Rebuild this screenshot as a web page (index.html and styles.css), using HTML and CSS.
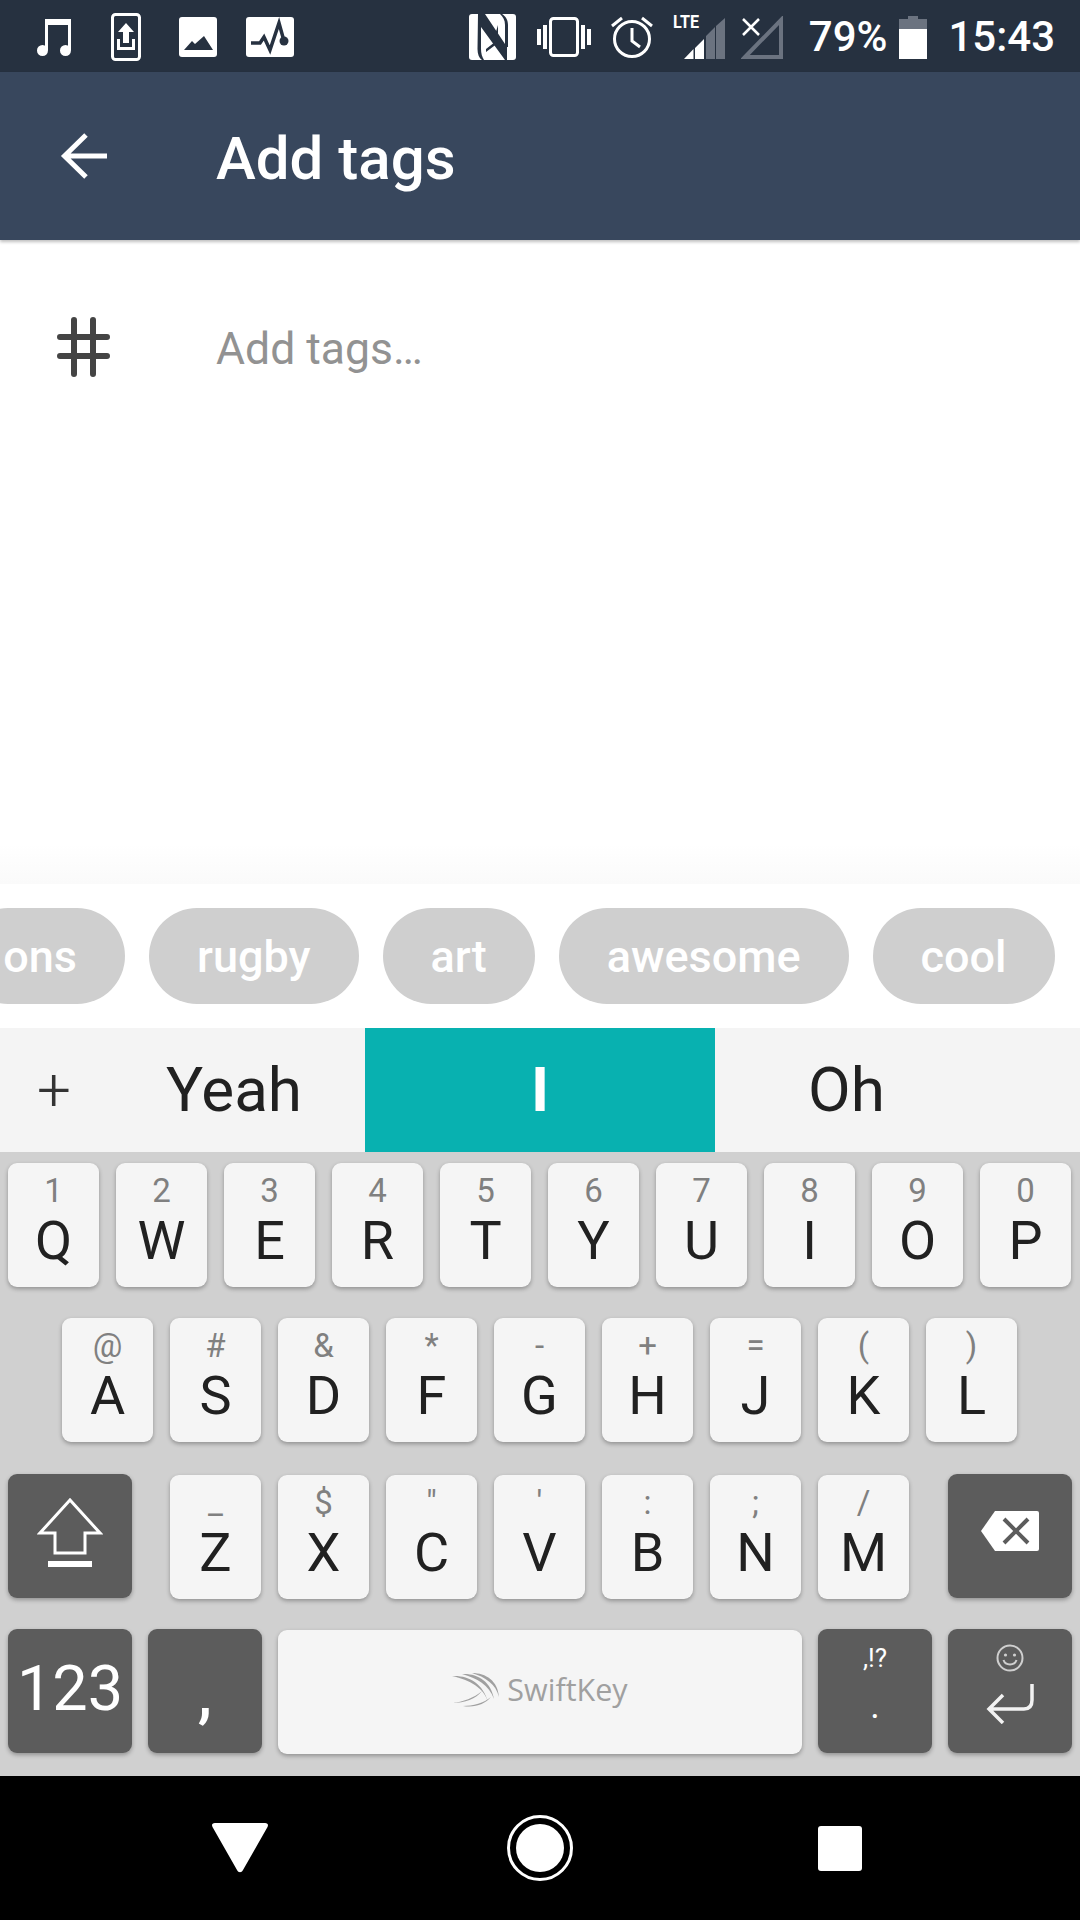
FILE: index.html
```html
<!DOCTYPE html>
<html lang="en">
<head>
<meta charset="utf-8">
<title>Add tags</title>
<link rel="stylesheet" href="styles.css">
</head>
<body>
<div class="phone">
  <div class="status">
    <svg class="si s-music" viewBox="0 0 34 37"><circle cx="5.500" cy="31.500" r="5.500" fill="#fff"/><circle cx="28.500" cy="31.500" r="5.500" fill="#fff"/><path fill="#fff" d="M8 31V0h26v31h-3V6H11v25z"/></svg>
    <svg class="si s-upload" viewBox="0 0 30 48"><rect x="1.500" y="1.500" width="27" height="45" rx="3" fill="none" stroke="#fff" stroke-width="3"/><path fill="#fff" d="M15 10l8 9h-5v11h-6V19H7zM6 26h3v8h12v-8h3v11H6z"/></svg>
    <svg class="si s-image" viewBox="0 0 38 40"><rect width="38" height="40" rx="3" fill="#fff"/><path fill="#263140" d="M5 33l8-9 3 3 9-8 9 14z"/></svg>
    <svg class="si s-pulse" viewBox="0 0 48 40"><rect width="48" height="40" rx="3" fill="#fff"/><path fill="none" stroke="#263140" stroke-width="3.500" d="M5 26h9l4-6 6 13 9-27 5 18"/><circle cx="38" cy="24" r="4.500" fill="#263140"/></svg>
    <span class="spring"></span>
    <svg class="si s-nfc" viewBox="0 0 47 46"><rect width="47" height="46" rx="3" fill="#fff"/><path fill="#263140" d="M9 0h7l22 33v13h-2L12 13v22c0 4 1 8 3 11h-2c-3-2-4.500-6-4.500-11z"/><path fill="#263140" d="M31 0h2c3 2 6 5 6 11v22h-3V11c0-5-2-8-5-11zM29 11v11l-3 3 3 4-12 9v-3l9-7-9-12v-3l9 8z" fill-rule="evenodd"/></svg>
    <svg class="si s-vib" viewBox="0 0 54 40"><rect x="13.500" y="1.500" width="27" height="37" rx="3" fill="none" stroke="#fff" stroke-width="3"/><path fill="#fff" d="M0 12h4v16H0zM6 8h4v24H6zM44 8h4v24h-4zM50 12h4v16h-4z"/></svg>
    <svg class="si s-alarm" viewBox="0 0 42 42"><circle cx="21" cy="23" r="17.500" fill="none" stroke="#fff" stroke-width="3"/><path fill="none" stroke="#fff" stroke-width="3" d="M21 12v13l8 6M1 10l10-8M41 10L31 2"/></svg>
    <span class="s-sig">
      <span class="lte">LTE</span>
      <svg class="si s-bars" viewBox="0 0 41 41"><path fill="#fff" d="M0 41l9.500-10v10zM11 30l9-9v20h-9z"/><path fill="#6b7380" d="M22 18l9-9v32h-9zM32 8l9-8v41h-9z"/></svg>
    </span>
    <svg class="si s-nosig" viewBox="0 0 42 43"><path fill="none" stroke="#6b7380" stroke-width="4" d="M4 41L40 4v37z"/><path fill="none" stroke="#fff" stroke-width="2.500" d="M2 3l16 16M18 3L2 19"/></svg>
    <span class="pct">79%</span>
    <svg class="si s-batt" viewBox="0 0 28 43"><path fill="#6b7380" d="M9 0h10v3h9v10H0V3h9z"/><path fill="#fff" d="M0 13h28v30H0z"/></svg>
    <span class="clock">15:43</span>
  </div>

  <header class="bar">
    <svg class="back" viewBox="0 0 48 48"><path fill="none" stroke="#fff" stroke-width="5" d="M47 24H6M26 3L4.500 24 26 45"/></svg>
    <h1 class="title">Add tags</h1>
  </header>

  <main class="body">
    <div class="field">
      <svg class="hash" viewBox="0 0 54 60"><path fill="none" stroke="#444" stroke-width="6" stroke-linecap="round" d="M17 3v54M36 3v54M3 20h47M3 39h47"/></svg>
      <span class="placeholder">Add tags…</span>
    </div>
    <div class="fade"></div>
  </main>

  <div class="chips">
    <span class="chip chip-cut">ons</span>
    <span class="chip">rugby</span>
    <span class="chip">art</span>
    <span class="chip">awesome</span>
    <span class="chip">cool</span>
  </div>

  <div class="cands">
    <span class="plus">+</span>
    <span class="cand cand-l">Yeah</span>
    <span class="cand cand-m">I</span>
    <span class="cand cand-r">Oh</span>
  </div>

  <div class="kbd">
    <div class="row row-1">
      <div class="key"><small>1</small><b>Q</b></div>
      <div class="key"><small>2</small><b>W</b></div>
      <div class="key"><small>3</small><b>E</b></div>
      <div class="key"><small>4</small><b>R</b></div>
      <div class="key"><small>5</small><b>T</b></div>
      <div class="key"><small>6</small><b>Y</b></div>
      <div class="key"><small>7</small><b>U</b></div>
      <div class="key"><small>8</small><b>I</b></div>
      <div class="key"><small>9</small><b>O</b></div>
      <div class="key"><small>0</small><b>P</b></div>
    </div>
    <div class="row row-2">
      <div class="key"><small>@</small><b>A</b></div>
      <div class="key"><small>#</small><b>S</b></div>
      <div class="key"><small>&amp;</small><b>D</b></div>
      <div class="key"><small>*</small><b>F</b></div>
      <div class="key"><small>-</small><b>G</b></div>
      <div class="key"><small>+</small><b>H</b></div>
      <div class="key"><small>=</small><b>J</b></div>
      <div class="key"><small>(</small><b>K</b></div>
      <div class="key"><small>)</small><b>L</b></div>
    </div>
    <div class="row row-3">
      <div class="dark wide">
        <svg class="shift" viewBox="0 0 66 70"><path fill="none" stroke="#fff" stroke-width="3" d="M33 3L3 36h15v20h30V36h15z"/><path fill="#fff" d="M11 64h44v6H11z"/></svg>
      </div>
      <div class="letters">
        <div class="key"><small>_</small><b>Z</b></div>
        <div class="key"><small>$</small><b>X</b></div>
        <div class="key"><small>"</small><b>C</b></div>
        <div class="key"><small>'</small><b>V</b></div>
        <div class="key"><small>:</small><b>B</b></div>
        <div class="key"><small>;</small><b>N</b></div>
        <div class="key"><small>/</small><b>M</b></div>
      </div>
      <div class="dark wide">
        <svg class="bksp" viewBox="0 0 58 40"><path fill="#fff" d="M14 0h42a2 2 0 0 1 2 2v36a2 2 0 0 1-2 2H14L0 20z"/><path fill="none" stroke="#5c5c5c" stroke-width="4" d="M23 8l24 24M47 8L23 32"/></svg>
      </div>
    </div>
    <div class="row row-4">
      <div class="dark wide num">123</div>
      <div class="dark comma">,</div>
      <div class="space">
        <svg class="swoosh" viewBox="0 0 48 34"><path fill="#a0a0a0" d="M0 3c16-1 31 7 36 26C32 15 18 7 0 3zM10 1c15-1 29 7 32 25C37 12 25 5 10 1zM20 0c14 0 26 8 27 24C44 11 33 4 20 0zM0 30c11-1 22-5 30-12-6 8-17 12-30 12zM11 33c10 0 21-3 28-9-6 7-16 11-28 9z"/></svg>
        <span class="brand">SwiftKey</span>
      </div>
      <div class="dark period"><small>,!?</small><span class="dot">.</span></div>
      <div class="dark wide enter">
        <svg class="smile" viewBox="0 0 28 28"><circle cx="14" cy="14" r="12.500" fill="none" stroke="#cfcfcf" stroke-width="2"/><circle cx="9.500" cy="11" r="1.600" fill="#cfcfcf"/><circle cx="18.500" cy="11" r="1.600" fill="#cfcfcf"/><path fill="none" stroke="#cfcfcf" stroke-width="2" d="M7.500 16c2 6 11 6 13 0"/></svg>
        <svg class="ret" viewBox="0 0 48 40"><path fill="none" stroke="#f2f2f2" stroke-width="3.500" d="M46 0v16c0 6-3 9-8 9H4M17 11L3 25l14 14"/></svg>
      </div>
    </div>
  </div>

  <nav class="nav">
    <svg class="n-back" viewBox="0 0 56 50"><path fill="#fff" d="M3 0h50c3 0 3.500 2 2.500 4L31 47c-1.500 3-4.500 3-6 0L.5 4C-.5 2 0 0 3 0z"/></svg>
    <svg class="n-home" viewBox="0 0 66 66"><circle cx="33" cy="33" r="31.500" fill="none" stroke="#fff" stroke-width="3"/><circle cx="33" cy="33" r="24" fill="#fff"/></svg>
    <span class="n-rec"></span>
  </nav>
</div>
</body>
</html>
```
FILE: styles.css
```css
* { box-sizing: border-box; margin: 0; padding: 0; }
html, body { width: 1080px; height: 1920px; overflow: hidden; }
body { font-family: Roboto, "Noto Sans", sans-serif; background: #fff; }
.phone { width: 1080px; height: 1920px; display: flex; flex-direction: column; }

.status { height: 72px; background: #263140; display: flex; align-items: center; padding: 2px 0 0 37px; color: #fff; flex: none; }
.si { display: block; flex: none; }
.spring { flex: 1; }
.s-music { width: 34px; height: 37px; }
.s-upload { width: 30px; height: 48px; margin-left: 40px; }
.s-image { width: 38px; height: 40px; margin-left: 38px; }
.s-pulse { width: 48px; height: 40px; margin-left: 29px; }
.s-nfc { width: 47px; height: 46px; }
.s-vib { width: 54px; height: 40px; margin-left: 21px; }
.s-alarm { width: 42px; height: 42px; margin-left: 20px; }
.s-sig { width: 52px; height: 44px; margin-left: 20px; position: relative; display: block; }
.lte { position: absolute; left: 0; top: 0; font-size: 19px; line-height: 14px; font-weight: 700; transform: scaleX(.85); transform-origin: left top; }
.s-bars { width: 41px; height: 41px; margin: 3px 0 0 11px; }
.s-nosig { width: 42px; height: 43px; margin-left: 16px; }
.pct { font-size: 42px; font-weight: 500; margin-left: 26px; line-height: 44px; }
.s-batt { width: 28px; height: 43px; margin-left: 12px; }
.clock { font-size: 42px; font-weight: 500; margin-left: 21px; margin-right: 25px; line-height: 44px; }

.bar { height: 168px; background: #38475d; display: flex; align-items: center; flex: none; box-shadow: 0 2px 3px rgba(0,0,0,.25); position: relative; padding-left: 60px; }
.back { width: 48px; height: 48px; display: block; margin-right: 108px; flex: none; }
.title { font-size: 60px; font-weight: 500; color: #fff; line-height: 64px; margin-top: 6px; }

.body { flex: 1; background: #fff; display: flex; flex-direction: column; justify-content: space-between; }
.field { display: flex; align-items: center; padding: 75px 0 0 57px; }
.hash { width: 54px; height: 60px; display: block; flex: none; margin-right: 105px; }
.placeholder { font-size: 44.500px; color: #929292; line-height: 60px; margin-top: 4px; }
.fade { height: 40px; background: linear-gradient(#fff, #fafafa); }

.chips { height: 144px; background: #fff; flex: none; display: flex; gap: 24px; align-items: center; overflow: hidden; }
.chip { height: 96px; border-radius: 48px; background: #cfcfcf; color: #fff; font-size: 45px; font-weight: 500; display: flex; align-items: center; justify-content: center; flex: none; padding: 0 48px; }
.chip-cut { margin-left: -40px; width: 165px; padding: 0 48px 0 0; justify-content: flex-end; }

.cands { height: 124px; background: #f4f4f4; flex: none; display: flex; align-items: center; color: #212121; }
.plus { width: 108px; text-align: center; font-size: 60px; font-weight: 300; color: #333; padding-bottom: 2px; }
.cand { display: flex; align-items: center; justify-content: center; height: 100%; font-size: 62px; padding-bottom: 2px; }
.cand-l { width: 257px; padding-right: 5px; }
.cand-m { width: 350px; background: #08b1b0; color: #fff; font-weight: 700; }
.cand-r { flex: 1; padding-right: 102px; }

.kbd { height: 624px; background: #d0d0d0; flex: none; padding-top: 11px; display: flex; flex-direction: column; gap: 31.300px; }
.row { height: 124px; display: flex; gap: 17px; flex: none; }
.row-1 { padding: 0 9px 0 8px; }
.row-2 { padding: 0 63px 0 62px; }
.row-3, .row-4 { padding: 0 8px; }
.row-3 { gap: 0; }
.letters { display: flex; gap: 17px; width: 739px; margin: 1px 39px 0 38px; flex: none; }
.key { flex: 1; height: 124px; background: #f5f5f5; border-radius: 9px; box-shadow: 0 2px 4px rgba(0,0,0,.3); display: flex; flex-direction: column; align-items: center; color: #212121; position: relative; }
.key small { font-size: 33px; color: #808080; line-height: 38px; margin-top: 9px; height: 38px; }
.key b { font-size: 54px; font-weight: 400; line-height: 60px; margin-top: 1px; }
.dark { height: 124px; background: #5c5c5c; border-radius: 9px; box-shadow: 0 2px 4px rgba(0,0,0,.3); color: #fff; display: flex; align-items: center; justify-content: center; flex: none; }
.wide { width: 124px; }
.shift { width: 66px; height: 70px; display: block; margin-top: -8px; }
.bksp { width: 58px; height: 40px; display: block; margin-top: -10px; }
.num { font-size: 63px; font-weight: 400; padding-bottom: 5px; }
.comma { width: 114px; margin-left: -1px; font-size: 64px; font-weight: 500; padding-top: 6px; }
.space { width: 524px; height: 124px; margin: 1px 0 0 -1px; background: #f5f5f5; border-radius: 9px; box-shadow: 0 2px 4px rgba(0,0,0,.3); display: flex; align-items: center; justify-content: center; gap: 7px; flex: none; padding-bottom: 4px; }
.swoosh { width: 48px; height: 34px; display: block; }
.brand { font-family: "Open Sans", Lato, sans-serif; font-size: 30.500px; color: #a0a0a0; line-height: 40px; font-weight: 400; margin-bottom: 2px; }
.period { width: 114px; flex-direction: column; justify-content: flex-start; margin-left: -1px; }
.period small { font-size: 26px; line-height: 30px; margin-top: 14px; }
.dot { font-size: 36px; line-height: 30px; margin-top: 18px; }
.enter { flex-direction: column; justify-content: flex-start; margin-left: -1px; }
.smile { width: 28px; height: 28px; display: block; margin-top: 15px; }
.ret { width: 48px; height: 40px; display: block; margin-top: 12px; }

.nav { height: 144px; background: #000; flex: none; display: flex; align-items: center; padding-left: 212px; }
.n-back { width: 56px; height: 50px; display: block; flex: none; }
.n-home { width: 66px; height: 66px; display: block; flex: none; margin-left: 239px; }
.n-rec { width: 44px; height: 45px; background: #fff; border-radius: 3px; flex: none; margin-left: 245px; }
```
